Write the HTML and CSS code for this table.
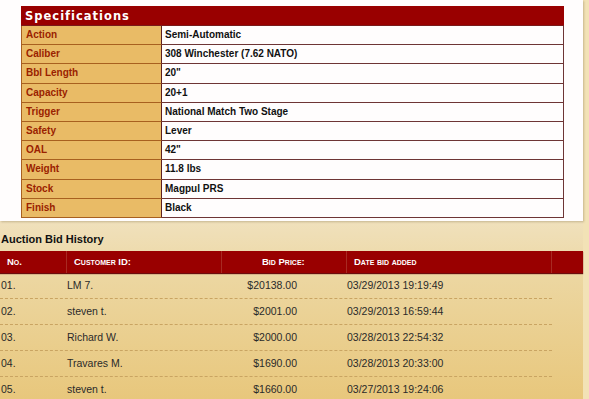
FILE: index.html
```html
<!DOCTYPE html>
<html>
<head>
<meta charset="utf-8">
<link rel="stylesheet" href="styles.css">
</head>
<body>
<div class="page">
  <div class="panel">
    <div class="specs">
      <div class="specs-head">Specifications</div>
      <div class="spec-row"><div class="spec-label">Action</div><div class="spec-value">Semi-Automatic</div></div>
      <div class="spec-row"><div class="spec-label">Caliber</div><div class="spec-value">308 Winchester (7.62 NATO)</div></div>
      <div class="spec-row"><div class="spec-label">Bbl Length</div><div class="spec-value">20"</div></div>
      <div class="spec-row"><div class="spec-label">Capacity</div><div class="spec-value">20+1</div></div>
      <div class="spec-row"><div class="spec-label">Trigger</div><div class="spec-value">National Match Two Stage</div></div>
      <div class="spec-row"><div class="spec-label">Safety</div><div class="spec-value">Lever</div></div>
      <div class="spec-row"><div class="spec-label">OAL</div><div class="spec-value">42"</div></div>
      <div class="spec-row"><div class="spec-label">Weight</div><div class="spec-value">11.8 lbs</div></div>
      <div class="spec-row"><div class="spec-label">Stock</div><div class="spec-value">Magpul PRS</div></div>
      <div class="spec-row"><div class="spec-label">Finish</div><div class="spec-value">Black</div></div>
    </div>
  </div>
  <div class="history">
    <h2 class="history-title">Auction Bid History</h2>
    <div class="bid-head">
      <div class="bh">No.</div>
      <div class="bh">Customer ID:</div>
      <div class="bh bh-price">Bid Price:</div>
      <div class="bh">Date bid added</div>
      <div class="bh"></div>
    </div>
    <div class="bid-row"><div>01.</div><div>LM 7.</div><div class="price">$20138.00</div><div>03/29/2013 19:19:49</div></div>
    <div class="bid-row"><div>02.</div><div>steven t.</div><div class="price">$2001.00</div><div>03/29/2013 16:59:44</div></div>
    <div class="bid-row"><div>03.</div><div>Richard W.</div><div class="price">$2000.00</div><div>03/28/2013 22:54:32</div></div>
    <div class="bid-row"><div>04.</div><div>Travares M.</div><div class="price">$1690.00</div><div>03/28/2013 20:33:00</div></div>
    <div class="bid-row last"><div>05.</div><div>steven t.</div><div class="price">$1660.00</div><div>03/27/2013 19:24:06</div></div>
  </div>
</div>
</body>
</html>
```

FILE: styles.css
```css
html, body {
  margin: 0;
  padding: 0;
}
body {
  background: #f2e2b6;
  font-family: "Liberation Sans", Arial, sans-serif;
  width: 589px;
  height: 399px;
  overflow: hidden;
}
.page {
  width: 583px;
  height: 399px;
  background: linear-gradient(to bottom, #f0e1bd 0px, #f0e1bd 220px, #ecd6a0 280px, #e8c77c 399px);
}
.panel {
  background: #fffdfd;
  height: 221px;
  padding-top: 6px;
  box-sizing: border-box;
  box-shadow: 1px 1px 2px rgba(120, 100, 60, 0.35);
}
.specs {
  margin-left: 21px;
  width: 543px;
  box-sizing: border-box;
}
.specs-head {
  height: 20px;
  background: #990000;
  color: #fff;
  font-family: "DejaVu Sans", Verdana, sans-serif;
  font-weight: bold;
  font-size: 11.5px;
  letter-spacing: 1px;
  line-height: 20px;
  padding-left: 4px;
  border-bottom: 1px solid #7a1a1a;
  box-sizing: border-box;
}
.spec-row {
  display: grid;
  grid-template-columns: 141px 1fr;
  height: 19.2px;
  box-sizing: border-box;
}
.spec-label {
  background: #e9bb66;
  color: #9a2200;
  font-weight: bold;
  font-size: 10px;
  line-height: 18px;
  padding-left: 4px;
  border-bottom: 1px solid #a8601f;
  border-left: 1px solid #a8601f;
  border-right: 1px solid #5e2020;
}
.spec-value {
  background: #fffdfd;
  color: #111;
  font-weight: bold;
  font-size: 10px;
  line-height: 18px;
  padding-left: 3px;
  border-bottom: 1px solid #6e3535;
  border-right: 1px solid #6e3535;
}
.history {
  padding-top: 12px;
}
.history-title {
  margin: 0 0 5px 1px;
  font-size: 11px;
  line-height: 13px;
  font-weight: bold;
  color: #111;
}
.bid-head {
  display: grid;
  grid-template-columns: 67px 155px 125px 205px 31px;
  height: 22px;
  background: #990000;
  box-shadow: 0 1px 1px #6a0d0d;
}
.bh {
  border-right: 1px solid #a82a22;
  color: #fff;
  font-weight: bold;
  font-size: 9.5px;
  font-variant: small-caps;
  line-height: 22px;
  padding-left: 7px;
}
.bh:last-child {
  border-right: none;
}
.bh-price {
  padding-left: 40px;
}
.bid-row {
  display: grid;
  grid-template-columns: 67px 155px 125px 205px;
  width: 552px;
  height: 26px;
  box-sizing: border-box;
  border-bottom: 1px dashed #c9a462;
  color: #2a2a2a;
  font-size: 10.5px;
  line-height: 25px;
}
.bid-row.last {
  border-bottom: none;
}
.bid-row > div:first-child {
  padding-left: 1px;
}
.bid-row .price {
  text-align: right;
  padding-right: 50px;
}
```
